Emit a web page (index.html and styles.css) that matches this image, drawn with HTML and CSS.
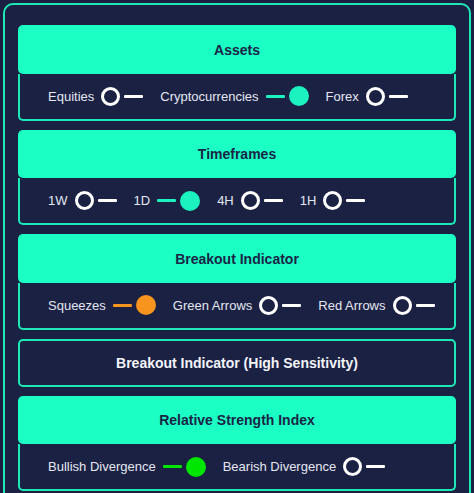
FILE: index.html
```html
<!DOCTYPE html>
<html>
<head>
<meta charset="utf-8">
<link rel="stylesheet" href="styles.css">
</head>
<body>
<div class="panel">
  <section class="group">
    <div class="head">Assets</div>
    <div class="body">
      <div class="opt"><span class="lbl">Equities</span><span class="tg off"><i class="knob"></i><i class="track"></i></span></div>
      <div class="opt"><span class="lbl">Cryptocurrencies</span><span class="tg on teal"><i class="track"></i><i class="knob"></i></span></div>
      <div class="opt"><span class="lbl">Forex</span><span class="tg off"><i class="knob"></i><i class="track"></i></span></div>
    </div>
  </section>
  <section class="group">
    <div class="head">Timeframes</div>
    <div class="body">
      <div class="opt"><span class="lbl">1W</span><span class="tg off"><i class="knob"></i><i class="track"></i></span></div>
      <div class="opt"><span class="lbl">1D</span><span class="tg on teal"><i class="track"></i><i class="knob"></i></span></div>
      <div class="opt"><span class="lbl">4H</span><span class="tg off"><i class="knob"></i><i class="track"></i></span></div>
      <div class="opt"><span class="lbl">1H</span><span class="tg off"><i class="knob"></i><i class="track"></i></span></div>
    </div>
  </section>
  <section class="group">
    <div class="head">Breakout Indicator</div>
    <div class="body">
      <div class="opt"><span class="lbl">Squeezes</span><span class="tg on orange"><i class="track"></i><i class="knob"></i></span></div>
      <div class="opt"><span class="lbl">Green Arrows</span><span class="tg off"><i class="knob"></i><i class="track"></i></span></div>
      <div class="opt"><span class="lbl">Red Arrows</span><span class="tg off"><i class="knob"></i><i class="track"></i></span></div>
    </div>
  </section>
  <section class="group">
    <div class="head outline">Breakout Indicator (High Sensitivity)</div>
  </section>
  <section class="group">
    <div class="head">Relative Strength Index</div>
    <div class="body">
      <div class="opt"><span class="lbl">Bullish Divergence</span><span class="tg on green"><i class="track"></i><i class="knob"></i></span></div>
      <div class="opt"><span class="lbl">Bearish Divergence</span><span class="tg off"><i class="knob"></i><i class="track"></i></span></div>
    </div>
  </section>
</div>
</body>
</html>
```

FILE: styles.css
```css
* { box-sizing: border-box; }
html, body {
  margin: 0;
  padding: 0;
  height: 493px;
  overflow: hidden;
  background: #1b2042;
}
body {
  padding: 3px;
  font-family: "Liberation Sans", Arial, sans-serif;
}
.panel {
  border: 2px solid #1de9b8;
  border-radius: 10px;
  background: #1b2143;
  padding: 20px 13px 40px 13px;
  display: flex;
  flex-direction: column;
  gap: 9px;
}
.group {
  display: flex;
  flex-direction: column;
}
.head {
  height: 48.5px;
  background: #1bffc4;
  border-radius: 5px;
  display: flex;
  align-items: center;
  justify-content: center;
  padding-top: 1px;
  font-weight: bold;
  font-size: 14px;
  color: #1b2446;
}
.head.outline {
  height: 48px;
  background: transparent;
  border: 2px solid #1de9b8;
  color: #f2f4fa;
}
.body {
  height: 47px;
  border: 2px solid #1de9b8;
  border-top: none;
  border-radius: 0 0 5px 5px;
  display: flex;
  align-items: center;
  padding: 0 0 0 28px;
  gap: 17px;
}
.opt {
  display: flex;
  align-items: center;
  gap: 7px;
}
.lbl {
  font-size: 13px;
  color: #e4e7f2;
}
.tg {
  display: flex;
  align-items: center;
  gap: 4px;
}
.tg i { display: block; }
.tg .track {
  width: 19px;
  height: 3px;
  border-radius: 1px;
  background: #ffffff;
}
.tg.off .knob {
  width: 19px;
  height: 19px;
  border-radius: 50%;
  border: 3.5px solid #ffffff;
  background: #1b2143;
}
.tg.on .knob {
  width: 20px;
  height: 20px;
  border-radius: 50%;
}
.tg.teal .track, .tg.teal .knob { background: #1bf2c0; }
.tg.orange .track, .tg.orange .knob { background: #f7941d; }
.tg.green .track, .tg.green .knob { background: #00e600; }
```
